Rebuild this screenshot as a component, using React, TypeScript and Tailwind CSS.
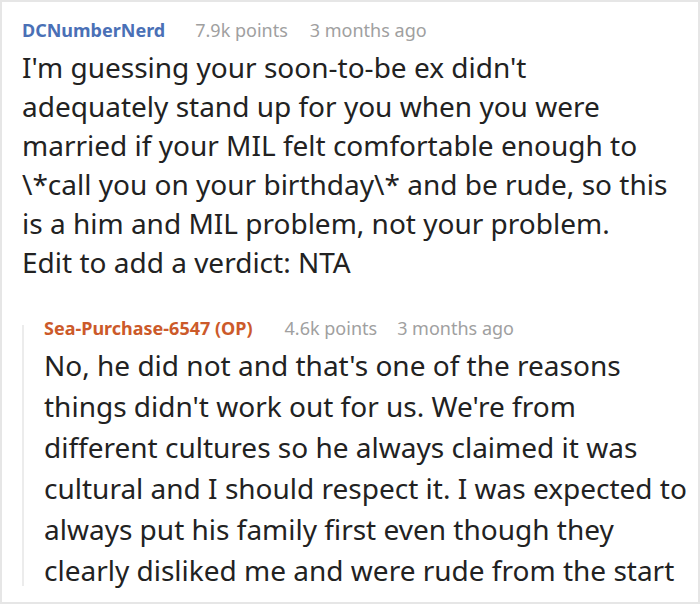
export default function App() {
  const first = [
    "I'm guessing your soon-to-be ex didn't",
    "adequately stand up for you when you were",
    "married if your MIL felt comfortable enough to",
    "\\*call you on your birthday\\* and be rude, so this",
    "is a him and MIL problem, not your problem.",
    "Edit to add a verdict: NTA",
  ];
  const reply = [
    "No, he did not and that's one of the reasons",
    "things didn't work out for us. We're from",
    "different cultures so he always claimed it was",
    "cultural and I should respect it. I was expected to",
    "always put his family first even though they",
    "clearly disliked me and were rude from the start",
  ];
  return (
    <div className="w-[700px] h-[604px] overflow-hidden bg-white">
      <div
        className="h-[604px] border-2 border-[#e6e6e6] pt-[16px] pl-[20px] text-[#1a1a1a]"
        style={{ fontFamily: '"Noto Sans", "Open Sans", sans-serif' }}
      >
        <div className="flex items-baseline text-[18px] leading-[24px]">
          <span className="font-bold text-[#4a70b6]">DCNumberNerd</span>
          <span className="ml-[30px] text-[#a0a0a0]">7.9k points</span>
          <span className="ml-[22px] text-[#a0a0a0]">3 months ago</span>
        </div>
        <div className="mt-[6px] text-[28px] leading-[39px] text-[#222]">
          {first.map((l, i) => (
            <div key={i} className="whitespace-nowrap">{l}</div>
          ))}
        </div>
        <div className="mt-[34px] flex items-start">
          <div className="mt-[9px] h-[261px] w-[2px] shrink-0 bg-[#ececec]" />
          <div className="pl-[20px]">
            <div className="flex items-baseline text-[18px] leading-[24px]">
              <span className="font-bold text-[#cc5a2a]">Sea-Purchase-6547 (OP)</span>
              <span className="ml-[32px] text-[#a0a0a0]">4.6k points</span>
              <span className="ml-[20px] text-[#a0a0a0]">3 months ago</span>
            </div>
            <div className="mt-[5px] text-[28px] leading-[41px] text-[#222]">
              {reply.map((l, i) => (
                <div key={i} className="whitespace-nowrap">{l}</div>
              ))}
            </div>
          </div>
        </div>
      </div>
    </div>
  );
}
